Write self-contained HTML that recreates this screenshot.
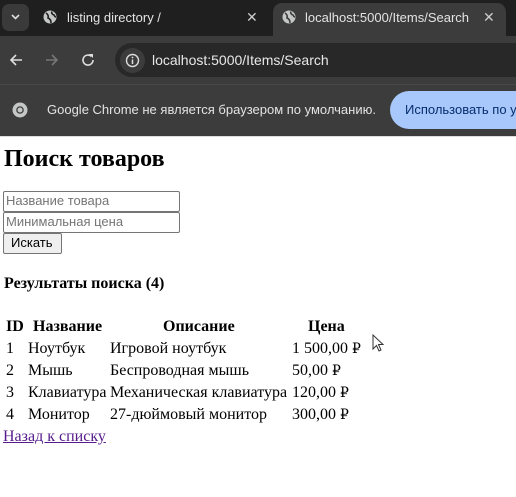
<!DOCTYPE html>
<html><head><meta charset="utf-8"><style>
*{margin:0;padding:0;box-sizing:border-box}
html,body{width:516px;height:497px;overflow:hidden}
body{background:#fff;font-family:"Liberation Serif",serif;font-size:16px;color:#000;position:relative}
.a{position:absolute;white-space:nowrap;line-height:18px}
.ui{font-family:"Liberation Sans",sans-serif}
b{font-weight:bold}
.r{font-family:"DejaVu Serif",serif;font-size:14px;line-height:18px;vertical-align:top}
</style></head><body>
<div class="a" style="left:0;top:0;width:516px;height:36px;background:#1f1f1f"></div>
<div class="a" style="left:2px;top:4px;width:27px;height:27px;background:#3a3a3a;border-radius:7px"></div>
<svg class="a" style="left:10px;top:13px" width="11" height="8"><path d="M2 2 L5.5 5.5 L9 2" stroke="#ddd" stroke-width="1.6" fill="none"/></svg>
<svg class="a" style="left:43px;top:10px" width="14" height="14"><circle cx="7" cy="7" r="6.5" fill="#c4c7c5"/><path d="M3 3 Q6 5 5 8 Q8 9 8 13 M9 1.5 Q8 4 11 5 Q12 7 13 7" stroke="#1f1f1f" stroke-width="1.6" fill="none"/></svg>
<div class="a ui" style="left:67px;top:9px;font-size:13px;color:#e3e3e3">listing directory /</div>
<div class="a ui" style="left:246px;top:8px;font-size:14px;color:#ccc">✕</div>
<div class="a" style="left:273px;top:3px;width:233px;height:36px;background:#3c3c3c;border-radius:9px 9px 0 0"></div>
<svg class="a" style="left:282px;top:10px" width="14" height="14"><circle cx="7" cy="7" r="6.5" fill="#c4c7c5"/><path d="M3 3 Q6 5 5 8 Q8 9 8 13 M9 1.5 Q8 4 11 5 Q12 7 13 7" stroke="#3c3c3c" stroke-width="1.6" fill="none"/></svg>
<div class="a ui" style="left:305px;top:9px;font-size:13px;color:#e3e3e3">localhost:5000/Items/Search</div>
<div class="a ui" style="left:483px;top:8px;font-size:14px;color:#ccc">✕</div>
<div class="a" style="left:0;top:36px;width:516px;height:48px;background:#3c3c3c"></div>
<svg class="a" style="left:9px;top:53px" width="14" height="14"><path d="M13 7H2 M7 2L2 7L7 12" stroke="#ddd" stroke-width="1.6" fill="none"/></svg>
<svg class="a" style="left:45px;top:53px" width="14" height="14"><path d="M1 7H12 M7 2L12 7L7 12" stroke="#777" stroke-width="1.6" fill="none"/></svg>
<svg class="a" style="left:81px;top:53px" width="14" height="14"><path d="M12 7A5 5 0 1 1 10.5 3.5" stroke="#ddd" stroke-width="1.6" fill="none"/><path d="M8 1H12V5Z" fill="#ddd"/></svg>
<div class="a" style="left:115px;top:43px;width:420px;height:34px;background:#282828;border-radius:17px"></div>
<div class="a" style="left:120px;top:48px;width:25px;height:25px;background:#3c3c3c;border-radius:50%"></div>
<svg class="a" style="left:125px;top:53px" width="15" height="15"><circle cx="7.5" cy="7.5" r="6" stroke="#ddd" stroke-width="1.4" fill="none"/><path d="M7.5 6.5V11" stroke="#ddd" stroke-width="1.5"/><circle cx="7.5" cy="4.5" r="0.9" fill="#ddd"/></svg>
<div class="a ui" style="left:152px;top:51px;font-size:14px;color:#e8e8e8">localhost:5000/Items/Search</div>
<div class="a" style="left:0;top:84px;width:516px;height:52px;background:#3c3c3c;border-top:1px solid #474747"></div>
<svg class="a" style="left:12px;top:102px" width="16" height="16"><circle cx="8" cy="8" r="7.5" fill="#c4c7c5"/><circle cx="8" cy="8" r="3.8" fill="#3c3c3c"/><circle cx="8" cy="8" r="2.5" fill="#c4c7c5"/></svg>
<div class="a ui" style="left:47px;top:101px;font-size:13px;color:#e3e3e3">Google Chrome не является браузером по умолчанию.</div>
<div class="a" style="left:390px;top:91px;width:126px;height:38px;background:#a8c7fa;border-radius:19px 0 0 19px;overflow:hidden"><div class="ui" style="position:absolute;left:15px;top:10px;font-size:13px;color:#062e6f;white-space:nowrap;line-height:18px">Использовать по умолчанию</div></div>
<div class="a" style="left:0;top:136px;width:516px;height:1px;background:#ddd"></div>
<div class="a" style="left:4px;top:147px;font-size:24px;line-height:24px;font-weight:bold">Поиск товаров</div>
<div class="a" style="left:3px;top:191px;width:177px;height:21px;border:1px solid #767676;border-radius:2px"></div>
<div class="a ui" style="left:6px;top:192px;font-size:13px;color:#757575">Название товара</div>
<div class="a" style="left:3px;top:212px;width:177px;height:21px;border:1px solid #767676;border-radius:2px"></div>
<div class="a ui" style="left:6px;top:213px;font-size:13px;color:#757575">Минимальная цена</div>
<div class="a" style="left:3px;top:233px;width:59px;height:21px;border:1px solid #767676;border-radius:2px;background:#efefef"></div>
<div class="a ui" style="left:11px;top:234px;font-size:13px">Искать</div>
<div class="a" style="left:4px;top:275px;font-size:16px;font-weight:bold">Результаты поиска (4)</div>
<div class="a" style="left:6px;top:318px"><b>ID</b></div>
<div class="a" style="left:33px;top:318px"><b>Название</b></div>
<div class="a" style="left:163px;top:318px"><b>Описание</b></div>
<div class="a" style="left:308px;top:318px"><b>Цена</b></div>
<div class="a" style="left:6px;top:340px">1</div><div class="a" style="left:28px;top:340px">Ноутбук</div><div class="a" style="left:110px;top:340px">Игровой ноутбук</div><div class="a" style="left:292px;top:340px">1 500,00 <span class="r">₽</span></div>
<div class="a" style="left:6px;top:362px">2</div><div class="a" style="left:28px;top:362px">Мышь</div><div class="a" style="left:110px;top:362px">Беспроводная мышь</div><div class="a" style="left:292px;top:362px">50,00 <span class="r">₽</span></div>
<div class="a" style="left:6px;top:384px">3</div><div class="a" style="left:28px;top:384px">Клавиатура</div><div class="a" style="left:110px;top:384px">Механическая клавиатура</div><div class="a" style="left:292px;top:384px">120,00 <span class="r">₽</span></div>
<div class="a" style="left:6px;top:406px">4</div><div class="a" style="left:28px;top:406px">Монитор</div><div class="a" style="left:110px;top:406px">27-дюймовый монитор</div><div class="a" style="left:292px;top:406px">300,00 <span class="r">₽</span></div>
<div class="a" style="left:3px;top:428px;color:#551a8b;text-decoration:underline">Назад к списку</div>
<svg class="a" style="left:372px;top:334px" width="14" height="20"><path d="M1 1 L1 15 L4.5 11.5 L7 17 L9 16 L6.5 10.5 L11 10.5 Z" fill="#fff" stroke="#333" stroke-width="1"/></svg>
</body></html>
